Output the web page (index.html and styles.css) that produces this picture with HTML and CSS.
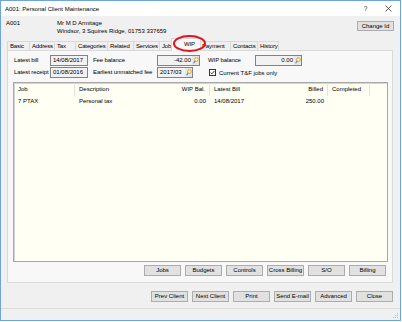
FILE: index.html
```html
<!DOCTYPE html>
<html lang="en">
   <head>
      <meta charset="UTF-8" />
      <meta name="viewport" content="width=device-width, initial-scale=1.0"/>
      <title>A001: Personal Client Maintenance</title>
      <link rel="stylesheet" href="styles.css">
   </head>
   <body>
      <div class="window">
         <div class="titlebar">
            <span class="title">A001: Personal Client Maintenance</span>
            <span class="ctrl">?</span>
            <span class="ctrl">
               <svg width="7" height="7" viewBox="0 0 7 7"><path d="M0.5 0.5L6.5 6.5M6.5 0.5L0.5 6.5" stroke="#333" stroke-width="0.8"/></svg>
            </span>
         </div>

         <div class="client">
            <div class="client-id">A001</div>
            <div class="client-info">
               <div>Mr M D Armitage</div>
               <div>Windsor, 3 Squires Ridge, 01753 337659</div>
            </div>
            <button class="btn change-id">Change Id</button>
         </div>

         <div class="tabs">
            <div class="tab">Basic</div>
            <div class="tab">Address</div>
            <div class="tab">Tax</div>
            <div class="tab">Categories</div>
            <div class="tab">Related</div>
            <div class="tab">Services</div>
            <div class="tab">Jobs</div>
            <div class="tab active">WIP</div>
            <div class="tab">Payment</div>
            <div class="tab">Contacts</div>
            <div class="tab last">History</div>
         </div>

         <div class="panel">
            <div class="summary">
               <div class="lbl">Latest bill</div>
               <div class="field">14/08/2017</div>
               <div class="lbl mid">Fee balance</div>
               <div class="field num">-42.00<span class="lookup"><svg width="6" height="7" viewBox="0 0 6 7"><circle cx="3.4" cy="2.6" r="1.9" fill="#fff3b0" stroke="#d7962a" stroke-width="0.8"/><path d="M2.1 4L0.6 6.2" stroke="#4f7fc2" stroke-width="1.1"/></svg></span></div>
               <div class="lbl right">WIP balance</div>
               <div class="field num">0.00<span class="lookup"><svg width="6" height="7" viewBox="0 0 6 7"><circle cx="3.4" cy="2.6" r="1.9" fill="#fff3b0" stroke="#d7962a" stroke-width="0.8"/><path d="M2.1 4L0.6 6.2" stroke="#4f7fc2" stroke-width="1.1"/></svg></span></div>

               <div class="lbl">Latest receipt</div>
               <div class="field">01/08/2016</div>
               <div class="lbl mid">Earliest unmatched fee</div>
               <div class="field short">2017/03<span class="lookup"><svg width="6" height="7" viewBox="0 0 6 7"><circle cx="3.4" cy="2.6" r="1.9" fill="#fff3b0" stroke="#d7962a" stroke-width="0.8"/><path d="M2.1 4L0.6 6.2" stroke="#4f7fc2" stroke-width="1.1"/></svg></span></div>
               <label class="check">
                  <span class="box"><svg width="5" height="5" viewBox="0 0 5 5"><path d="M0.6 2.6L1.9 3.9L4.4 0.9" fill="none" stroke="#222" stroke-width="0.9"/></svg></span>
                  Current T&amp;F jobs only
               </label>
            </div>

            <div class="list">
               <div class="lrow lhead">
                  <div class="sep">Job</div>
                  <div>Description</div>
                  <div class="num sep">WIP Bal.</div>
                  <div>Latest Bill</div>
                  <div class="num sep">Billed</div>
                  <div class="sep">Completed</div>
                  <div></div>
               </div>
               <div class="lrow">
                  <div>7 PTAX</div>
                  <div>Personal tax</div>
                  <div class="num">0.00</div>
                  <div>14/08/2017</div>
                  <div class="num">250.00</div>
                  <div></div>
                  <div></div>
               </div>
            </div>

            <div class="btnrow">
               <button class="btn">Jobs</button>
               <button class="btn">Budgets</button>
               <button class="btn">Controls</button>
               <button class="btn">Cross Billing</button>
               <button class="btn">S/O</button>
               <button class="btn">Billing</button>
            </div>
         </div>

         <div class="btnrow footer">
            <button class="btn">Prev Client</button>
            <button class="btn">Next Client</button>
            <button class="btn">Print</button>
            <button class="btn">Send E-mail</button>
            <button class="btn">Advanced</button>
            <button class="btn">Close</button>
         </div>

         <div class="statusbar">
            <svg class="grip" width="7" height="7" viewBox="0 0 7 7"><g fill="#b8b8b8"><rect x="5" y="1" width="1" height="1"/><rect x="3" y="3" width="1" height="1"/><rect x="5" y="3" width="1" height="1"/><rect x="1" y="5" width="1" height="1"/><rect x="3" y="5" width="1" height="1"/><rect x="5" y="5" width="1" height="1"/></g></svg>
         </div>

         <div class="mark"></div>
      </div>
   </body>
</html>
```

FILE: styles.css
```css
body {
margin: 0;
background-color: #ffffff;
font-family: 'Liberation Sans', Arial, sans-serif;
font-size: 6px;
color: #000;
}
.window {
position: relative;
width: 401px;
height: 321px;
box-sizing: border-box;
border: 1px solid #6ea6dc;
background-color: #f0f0f0;
display: flex;
flex-direction: column;
}
.titlebar {
height: 15px;
flex-shrink: 0;
background-color: #ffffff;
display: flex;
align-items: center;
padding-left: 4px;
}
.title {
flex: 1;
}
.ctrl {
width: 23px;
text-align: center;
font-size: 6.5px;
color: #333;
display: flex;
justify-content: center;
}
.client {
height: 25px;
flex-shrink: 0;
box-sizing: border-box;
display: flex;
padding: 4px 6px 0 5px;
line-height: 7.5px;
}
.client-id {
width: 51px;
}
.client-info {
flex: 1;
}
.btn {
width: 37px;
height: 11px;
box-sizing: border-box;
border: 1px solid #adadad;
background-color: #e1e1e1;
font-family: inherit;
font-size: 6px;
color: #000;
padding: 0;
line-height: 9px;
text-align: center;
white-space: nowrap;
}
.change-id {
height: 10px;
margin-top: 1px;
}
.tabs {
height: 9px;
flex-shrink: 0;
display: grid;
grid-template-columns: 22px 25px 21px 32px 26px 26px 14px 26px 31px 27px 22px;
grid-template-rows: 9px;
margin-left: 6px;
align-items: stretch;
letter-spacing: -0.15px;
}
.tab {
box-sizing: border-box;
border: 1px solid #d9d9d9;
border-bottom: none;
border-right: none;
background-color: #f0f0f0;
padding-left: 2px;
line-height: 8px;
white-space: nowrap;
overflow: hidden;
}
.tab.last {
border-right: 1px solid #d9d9d9;
}
.tab.active {
position: relative;
z-index: 1;
margin: -3px -2px -1px -2px;
border-right: 1px solid #d9d9d9;
background-color: #f8f8f8;
padding-left: 12px;
line-height: 11px;
}
.panel {
height: 233px;
flex-shrink: 0;
box-sizing: border-box;
margin: 0 7px 0 6px;
border: 1px solid #d9d9d9;
background-color: #f8f8f8;
padding: 4px 4px 6px 5px;
display: flex;
flex-direction: column;
}
.summary {
display: grid;
grid-template-columns: 36px 38px 69px 43px 55px 47px;
grid-auto-rows: 11px;
row-gap: 1px;
padding-left: 1px;
}
.lbl {
line-height: 11px;
white-space: nowrap;
letter-spacing: -0.1px;
}
.lbl.mid {
padding-left: 5px;
}
.lbl.right {
padding-left: 8px;
}
.field {
box-sizing: border-box;
border: 1px solid #828282;
background-color: #f2f2f2;
display: flex;
align-items: center;
padding-left: 2px;
line-height: 9px;
white-space: nowrap;
}
.field.num {
justify-content: flex-end;
padding-left: 0;
}
.field.short {
width: 36px;
justify-content: space-between;
}
.lookup {
width: 7px;
height: 9px;
display: flex;
align-items: center;
justify-content: center;
margin-left: 1px;
background-color: #e6e6e6;
}
.check {
grid-column: 5 / span 2;
display: flex;
align-items: center;
gap: 3px;
padding-left: 9px;
white-space: nowrap;
}
.box {
width: 7px;
height: 7px;
box-sizing: border-box;
border: 1px solid #333;
background-color: #fff;
display: flex;
align-items: center;
justify-content: center;
}
.list {
flex: 1;
margin-top: 4px;
box-sizing: border-box;
border: 1px solid #a9a9a9;
box-shadow: inset 1px 1px 0 #d4d4d4;
background-color: #fffff4;
}
.lrow {
display: grid;
grid-template-columns: 61px 90px 45px 58px 60px 42px 1fr;
height: 10px;
line-height: 10px;
white-space: nowrap;
}
.lrow > div {
padding-left: 4px;
}
.lrow > .num {
padding-left: 0;
padding-right: 4px;
text-align: right;
}
.lhead {
height: 13px;
line-height: 13px;
}
.lhead > .sep {
border-right: 1px solid #e3e3e3;
}
.btnrow {
display: flex;
justify-content: flex-end;
gap: 4px;
margin-top: 3px;
padding-right: 2px;
}
.btnrow.footer {
margin-top: 8px;
padding-right: 7px;
}
.statusbar {
flex: 1;
margin-top: 6px;
border-top: 1px solid #dcdcdc;
display: flex;
justify-content: flex-end;
align-items: flex-end;
}
.grip {
margin: 0 1px 1px 0;
}
.mark {
position: absolute;
left: 172px;
top: 34px;
width: 33px;
height: 17px;
box-sizing: border-box;
border: 2px solid #e3121c;
border-radius: 50%;
z-index: 2;
}
```
